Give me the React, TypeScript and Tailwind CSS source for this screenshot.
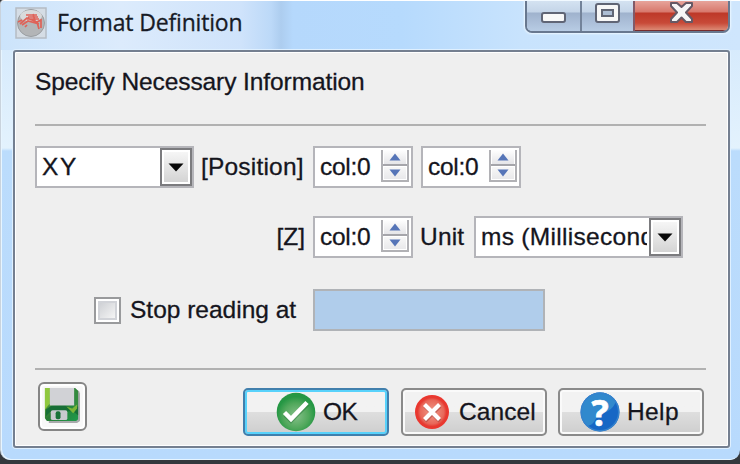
import React from "react";

const body = "font-['Liberation_Sans',Arial,sans-serif] text-[24.5px] text-[#15151d] whitespace-pre [-webkit-text-stroke:0.3px_#15151d]";

function DropButton() {
  return (
    <div className="h-[38px] w-[32px] shrink-0 border-2 border-[#7b7b7e] bg-white p-[2px]">
      <div className="flex h-full w-full items-center justify-center bg-gradient-to-b from-[#f6f6f6] to-[#d4d4d4]">
        <svg width="16" height="9" viewBox="0 0 16 9"><path d="M0.5 0.5H15.5L8 8.5Z" fill="#080808" /></svg>
      </div>
    </div>
  );
}

function Combo({ text, width, tracking }: { text: string; width: string; tracking: string }) {
  return (
    <div className={`flex h-[42px] items-center border-2 border-[#b5b5ba] bg-white ${width}`}>
      <div className={`ml-[5px] mr-[2px] h-[38px] min-w-0 flex-1 overflow-hidden ${body} leading-[37px] ${tracking}`}>{text}</div>
      <DropButton />
    </div>
  );
}

function Spinner() {
  return (
    <div className="flex h-[42px] w-[100px] justify-between border-2 border-[#b5b5ba] bg-white pl-[5px] pr-[2px]">
      <span className={`${body} leading-[37px] tracking-[-0.3px]`}>col:0</span>
      <div className="mt-[2px] flex h-[32px] w-[28px] flex-col border-x-2 border-b-2 border-[#b1b1b5] bg-white">
        <div className="flex h-[14px] items-center justify-center border-x border-white bg-gradient-to-b from-white to-[#e5e5e8]">
          <svg width="12" height="8" viewBox="0 0 12 8"><path d="M6 0.5L11.5 7.5H0.5Z" fill="#5675b8" /></svg>
        </div>
        <div className="h-[2px] bg-[#a5a5aa]" />
        <div className="flex h-[14px] items-center justify-center border border-white bg-gradient-to-b from-[#f7f7f7] to-[#e9e9eb]">
          <svg width="12" height="8" viewBox="0 0 12 8"><path d="M0.5 0.5H11.5L6 7.5Z" fill="#5675b8" /></svg>
        </div>
      </div>
    </div>
  );
}

function AppIcon() {
  return (
    <svg width="32" height="32" viewBox="0 0 32 32">
      <rect x="1" y="1" width="30" height="30" fill="#d5dde5" stroke="#b5bcc4" strokeWidth="1.5" />
      <circle cx="16" cy="16" r="13.5" fill="#b3b5b7" stroke="#999da1" strokeWidth="1" />
      <ellipse cx="16" cy="9" rx="11" ry="6" fill="#d9dadb" />
      <path d="M3 15L7 13M5 17L12 11L22 15L26 13V21M7 18L13 14L24 17M10 20L12 18M22 15L24 22M11 8H22M13 10H23M12 12H24M18 7L20 14" fill="none" stroke="#df6258" strokeWidth="1.7" />
    </svg>
  );
}

function SaveIcon() {
  return (
    <svg width="39" height="39" viewBox="0 0 40 40">
      <defs>
        <linearGradient id="disk" x1="0" y1="0" x2="1" y2="1">
          <stop offset="0" stopColor="#8ac13c" /><stop offset=".5" stopColor="#287b35" /><stop offset="1" stopColor="#1f9b4c" />
        </linearGradient>
      </defs>
      <path d="M6 6H38L39 9V37L36 39H7Z" fill="#a9aaac" />
      <path d="M3 3H34L37 6V35L35 37H5L3 34Z" fill="url(#disk)" />
      <path d="M3 3H8V19L3 25Z" fill="#90c83e" />
      <path d="M33 3L37 7V31L30 25L34 19Z" fill="#338b3e" />
      <path d="M4 25L10 21H24L30 24L37 22V31L32 27H9L4 32Z" fill="#176f36" />
      <path d="M25 22L31 24L36 20V24L32 29Z" fill="#7bb637" />
      <rect x="8" y="3" width="25" height="18" fill="#d1d2d6" />
      <rect x="9" y="26" width="17" height="10" rx="2" fill="#c9cacf" />
      <rect x="14" y="27" width="5" height="8" rx="2" fill="#197238" />
    </svg>
  );
}

function OkIcon() {
  return (
    <svg width="40" height="40" viewBox="0 0 40 40">
      <defs><radialGradient id="ok" cx=".5" cy=".6" r=".5"><stop offset="0" stopColor="#86c08a" /><stop offset=".65" stopColor="#51a85c" /><stop offset="1" stopColor="#259744" /></radialGradient></defs>
      <circle cx="20" cy="20" r="19.3" fill="url(#ok)" />
      <path d="M9 23L15 29L32 12" fill="none" stroke="#2f7e40" strokeWidth="4" opacity=".55" />
      <path d="M8.5 20.5L15 27L31 10.5" fill="none" stroke="#fff" strokeWidth="4.5" />
    </svg>
  );
}

function CancelIcon() {
  return (
    <svg width="36" height="36" viewBox="0 0 36 36">
      <defs><radialGradient id="cancel"><stop offset="0" stopColor="#ef9c8c" /><stop offset=".7" stopColor="#e86759" /><stop offset=".85" stopColor="#e63a31" /><stop offset="1" stopColor="#ed352d" /></radialGradient></defs>
      <circle cx="18" cy="18" r="17" fill="url(#cancel)" />
      <path d="M11 12L26 27M26 12L11 27" stroke="#a94842" strokeWidth="4" opacity=".6" />
      <path d="M10.5 10.5L25.5 25.5M25.5 10.5L10.5 25.5" stroke="#fff" strokeWidth="4.2" />
    </svg>
  );
}

function HelpIcon() {
  return (
    <svg className="overflow-visible" width="40" height="40" viewBox="0 0 40 40">
      <circle cx="20" cy="20" r="19.5" fill="#1767c5" />
      <path d="M20 .5A19.5 19.5 0 0 0 7 34C16 33 13 26 22 22C31 18 34 15 36 9A19.5 19.5 0 0 0 20 .5Z" fill="#3189cd" />
      <circle cx="20" cy="20" r="18.7" fill="none" stroke="#3583cd" strokeWidth="1.4" />
      <text x="20" y="33.5" textAnchor="middle" fontFamily="Open Sans, sans-serif" fontWeight="700" fontSize="36" fill="#fff" stroke="#fff" strokeWidth=".7">?</text>
    </svg>
  );
}

const actionButton = "flex h-[48px] w-[146px] items-center rounded-[5px] border-2 bg-gradient-to-b from-[#f2f2f2] from-50% via-[#dedede] via-51% to-[#cecece]";

export default function App() {
  return (
    <div className="h-[464px] w-[740px] overflow-hidden bg-[#34383d]">
      <div className="flex h-[460px] w-[740px] flex-col rounded-b-[10px] rounded-tl-[4px] border-l border-t border-l-[#c9d3dd] border-t-white bg-[linear-gradient(180deg,#d1e7fc_0px,#e3f2fd_147px,#bbdcfc_150px,#b8dafd_100%)] pr-[10px] shadow-[inset_1px_-1px_0_#e7f5ff]">
        <header className="flex h-[49px] w-[739px] shrink-0 items-start justify-between rounded-tl-[4px] bg-[linear-gradient(90deg,#cce4fb_0px,#dcebfc_120px,#cfe3fb_240px,#bcd9f8_270px,#adcdef_280px,#b5d8fc_292px,#b6dafd_400px,#c8e3fd_520px,#cfe6fd_100%)] pl-[14px]">
          <div className="flex items-start pt-[6px]">
            <AppIcon />
            <h1 className="ml-[10px] mt-[-2px] whitespace-nowrap font-['Open_Sans',sans-serif] text-[23px] leading-[34px] tracking-[-0.17px] text-[#171b26] [-webkit-text-stroke:0.3px_#171b26]">Format Definition</h1>
          </div>
          <div className="mr-[10px] flex h-[32px] w-[205px] overflow-hidden rounded-b-[7px] border-x-2 border-b-2 border-[#68788f] shadow-[0_0_2px_1px_#edf7ff]">
            <div className="flex w-[55px] items-start justify-center border-r-2 border-[#73839a] bg-[linear-gradient(#d4e2f1_0px,#c4d5e8_11px,#9fb2cd_12px,#b8cce4_100%)] pt-[11px]">
              <div className="h-[11px] w-[25px] rounded-[3px] border-2 border-[#606575] bg-[#f8f8f8]" />
            </div>
            <div className="flex w-[53px] items-start justify-center border-r-2 border-[#815a68] bg-[linear-gradient(#d4e2f1_0px,#c4d5e8_11px,#9fb2cd_12px,#b8cce4_100%)] pt-[2px]">
              <div className="h-[20px] w-[25px] rounded-[3px] border-2 border-[#606575] bg-[#f7f7f7] p-[4px]">
                <div className="h-full w-full border-2 border-[#606575] bg-[#acbdd4]" />
              </div>
            </div>
            <div className="flex flex-1 justify-center border-b border-[#772c2c] bg-[linear-gradient(#e7a49b_0px,#d7786c_11px,#bd3828_12px,#c84a38_22px,#dc8a75_100%)] pt-[1px]">
              <svg width="25" height="21" viewBox="0 0 25 21"><path d="M2 1H8L12.5 5L17 1H23V4L17 10.5L23 17V20H17L12.5 15.5L8 20H2V17L8 10.5L2 4Z" fill="#f6f6f6" stroke="#655965" strokeWidth="2" strokeLinejoin="round" /></svg>
            </div>
          </div>
        </header>
        <main className="ml-[12px] h-[398px] w-[717px] shrink-0 rounded-[3px] border-2 border-[#747f90] bg-[#efefef] pl-[20px] pr-[23px] shadow-[inset_0_0_0_1px_#fff,0_0_0_1px_#dff0ff]">
          <p className={`h-[72px] pt-[9px] ${body} leading-[42px] tracking-[-0.09px]`}>Specify Necessary Information</p>
          <div className="h-[2px] w-[671px] bg-[#b1b1b1]" />
          <div className="mt-[20px] flex h-[42px]">
            <Combo text="X Y" width="w-[159px]" tracking="tracking-[-2.4px]" />
            <span className={`ml-[7px] w-[112px] ${body} leading-[42px] tracking-[.2px]`}>[Position]</span>
            <Spinner />
            <div className="w-[8px]" />
            <Spinner />
          </div>
          <div className="mt-[28px] flex h-[42px]">
            <span className={`w-[278px] pr-[8px] text-right ${body} leading-[42px]`}>[Z]</span>
            <Spinner />
            <span className={`w-[61px] pl-[7px] ${body} leading-[42px] tracking-[.2px]`}>Unit</span>
            <Combo text="ms (Millisecond" width="w-[209px]" tracking="tracking-[.3px]" />
          </div>
          <div className="mt-[31px] flex h-[42px] items-center pl-[59px]">
            <div className="h-[27px] w-[27px] border-2 border-[#999a9c] bg-white p-[2px]">
              <div className="h-full w-full border-2 border-[#d1d3d8] bg-gradient-to-br from-[#cfd1d5] to-[#f5f5f5]" />
            </div>
            <span className={`ml-[9px] w-[183px] ${body} leading-[42px]`}>Stop reading at</span>
            <div className="h-[42px] w-[232px] border-2 border-[#b0b3b7] bg-[#b0cdeb]" />
          </div>
          <div className="mt-[37px] h-[2px] w-[671px] bg-[#b1b1b1]" />
          <div className="flex h-[66px] items-start pl-[3px] pt-[12px]">
            <button className="flex h-[49px] w-[49px] items-start justify-start rounded-[6px] border-2 border-[#858585] bg-[#f8f8f8] pl-[2px] pt-[1px] shadow-[inset_0_0_0_2px_#fff]">
              <SaveIcon />
            </button>
            <button className={`ml-[156px] mt-[6px] border-[#417fac] pl-[31px] shadow-[inset_0_0_0_2px_#58d2fb] ${actionButton}`}>
              <OkIcon />
              <span className={`ml-[7px] ${body} leading-[42px] tracking-[-.5px]`}>OK</span>
            </button>
            <button className={`ml-[12px] mt-[6px] border-[#8a8a8a] pl-[11px] shadow-[inset_0_0_0_2px_#fafafa] ${actionButton}`}>
              <CancelIcon />
              <span className={`ml-[9px] ${body} leading-[42px] tracking-[.1px]`}>Cancel</span>
            </button>
            <button className={`ml-[11px] mt-[6px] border-[#8a8a8a] pl-[20px] shadow-[inset_0_0_0_2px_#fafafa] ${actionButton}`}>
              <HelpIcon />
              <span className={`ml-[7px] ${body} leading-[42px] tracking-[.4px]`}>Help</span>
            </button>
          </div>
        </main>
      </div>
    </div>
  );
}
